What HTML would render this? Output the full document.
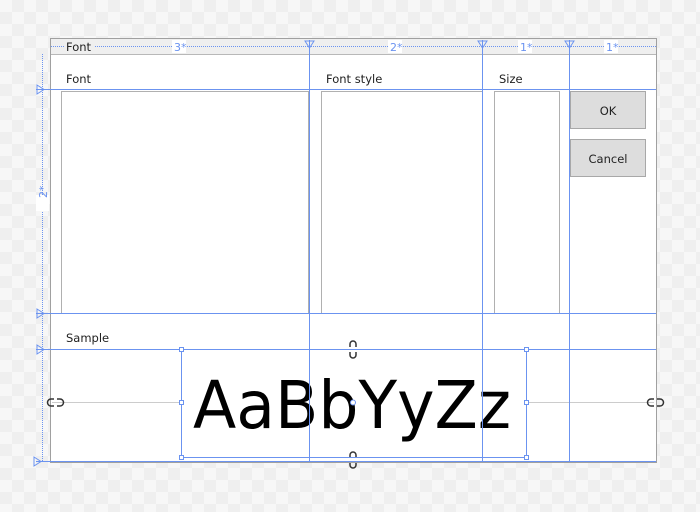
<!DOCTYPE html>
<html><head><style>
html,body{margin:0;padding:0;width:700px;height:512px;overflow:hidden;
background-color:#f7f7f7;
background-image:linear-gradient(45deg,#efefef 25%,transparent 25%,transparent 75%,#efefef 75%),linear-gradient(45deg,#efefef 25%,transparent 25%,transparent 75%,#efefef 75%);
background-size:24px 24px;background-position:0 0,12px 12px;}
svg{position:absolute;left:0;top:0}
.l{position:absolute;background:#6b93f0}
</style></head><body>
<svg width="700" height="512" xmlns="http://www.w3.org/2000/svg" font-family="DejaVu Sans, Liberation Sans, sans-serif" shape-rendering="crispEdges">
<rect x="50.5" y="38.5" width="606" height="424" fill="#fff" stroke="#a0a0a0"/>
<rect x="51" y="39" width="605" height="15" fill="#efefef"/>
<line x1="51" y1="54.5" x2="656" y2="54.5" stroke="#b8b8b8"/>
<line x1="51" y1="46.5" x2="656" y2="46.5" stroke="#6b93f0" stroke-dasharray="1 1"/>
<line x1="42.5" y1="54" x2="42.5" y2="462" stroke="#6b93f0" stroke-dasharray="1 1"/>
<rect x="64" y="40" width="30" height="13" fill="#efefef"/>
<text x="66" y="51" font-size="11.5" fill="#222">Font</text>
<rect x="172" y="40" width="14" height="13" fill="#fff"/><text x="174" y="51" font-size="11" fill="#6b93f0">3*</text>
<rect x="388" y="40" width="14" height="13" fill="#fff"/><text x="390" y="51" font-size="11" fill="#6b93f0">2*</text>
<rect x="518" y="40" width="14" height="13" fill="#fff"/><text x="520" y="51" font-size="11" fill="#6b93f0">1*</text>
<rect x="604" y="40" width="14" height="13" fill="#fff"/><text x="606" y="51" font-size="11" fill="#6b93f0">1*</text>
<rect x="36" y="195" width="13" height="16" fill="#fff"/><text x="46" y="207" font-size="11" fill="#6b93f0" transform="rotate(-90 42 202)">2*</text>
<text x="66" y="83" font-size="11.5" fill="#222">Font</text>
<text x="326" y="83" font-size="11.5" fill="#222">Font style</text>
<text x="499" y="83" font-size="11.5" fill="#222">Size</text>
<text x="66" y="342" font-size="11.5" fill="#222">Sample</text>
<rect x="61.5" y="91.5" width="247" height="222" fill="#fff" stroke="#b0b0b0"/>
<rect x="321.5" y="91.5" width="161" height="222" fill="#fff" stroke="#b0b0b0"/>
<rect x="494.5" y="91.5" width="65" height="222" fill="#fff" stroke="#b0b0b0"/>
<rect x="570.5" y="91.5" width="75" height="37" fill="#dddddd" stroke="#a8a8a8"/>
<text x="608" y="115" font-size="11.5" fill="#222" text-anchor="middle">OK</text>
<rect x="570.5" y="139.5" width="75" height="37" fill="#dddddd" stroke="#a8a8a8"/>
<text x="608" y="163" font-size="11.5" fill="#222" text-anchor="middle">Cancel</text>
<line x1="52" y1="402.5" x2="179" y2="402.5" stroke="#ccc"/>
<line x1="529" y1="402.5" x2="654" y2="402.5" stroke="#ccc"/>
<text x="193" y="428" font-size="66" fill="#000" textLength="318" lengthAdjust="spacingAndGlyphs">AaBbYyZz</text>
<g fill="#6b93f0">
<rect x="36" y="89" width="620" height="1"/>
<rect x="36" y="313" width="620" height="1"/>
<rect x="36" y="349" width="620" height="1"/>
<rect x="36" y="461" width="620" height="1"/>
<rect x="309" y="40" width="1" height="422"/>
<rect x="482" y="40" width="1" height="422"/>
<rect x="569" y="40" width="1" height="422"/>
<rect x="181" y="349" width="1" height="109"/>
<rect x="526" y="349" width="1" height="109"/>
<rect x="181" y="457" width="346" height="1"/>
</g>
<g stroke="#6b93f0" fill="none" shape-rendering="auto">
<path d="M305 41h9l-4.5 7z M478 41h9l-4.5 7z M565 41h9l-4.5 7z"/>
<path d="M37 85v9l7-4.5z M37 309v9l7-4.5z M37 345v9l7-4.5z M34 457v9l7-4.5z"/>
<rect x="179.5" y="347.5" width="4" height="4" fill="#fff"/><rect x="524.5" y="347.5" width="4" height="4" fill="#fff"/>
<rect x="179.5" y="455.5" width="4" height="4" fill="#fff"/><rect x="524.5" y="455.5" width="4" height="4" fill="#fff"/>
<rect x="179.5" y="400.5" width="4" height="4" fill="#fff"/><rect x="524.5" y="400.5" width="4" height="4" fill="#fff"/>
<circle cx="353" cy="402.5" r="2.5" fill="#fff"/>
</g>
<g fill="none" stroke="#333" stroke-width="1.5" shape-rendering="auto">
<path d="M350 344a3 3 0 0 1 6 0v3M350 344v3M350 355a3 3 0 0 0 6 0v-3M350 355v-3"/>
<path d="M350 455a3 3 0 0 1 6 0v2M350 455v2M350 465a3 3 0 0 0 6 0v-2M350 465v-2"/>
<path d="M51 399h3M51 406h3M51 399a3.5 3.5 0 0 0 0 7M60 399h-3M60 406h-3M60 399a3.5 3.5 0 0 1 0 7"/>
<path d="M651 399h3M651 406h3M651 399a3.5 3.5 0 0 0 0 7M660 399h-3M660 406h-3M660 399a3.5 3.5 0 0 1 0 7"/>
</g>
</svg>
</body></html>
